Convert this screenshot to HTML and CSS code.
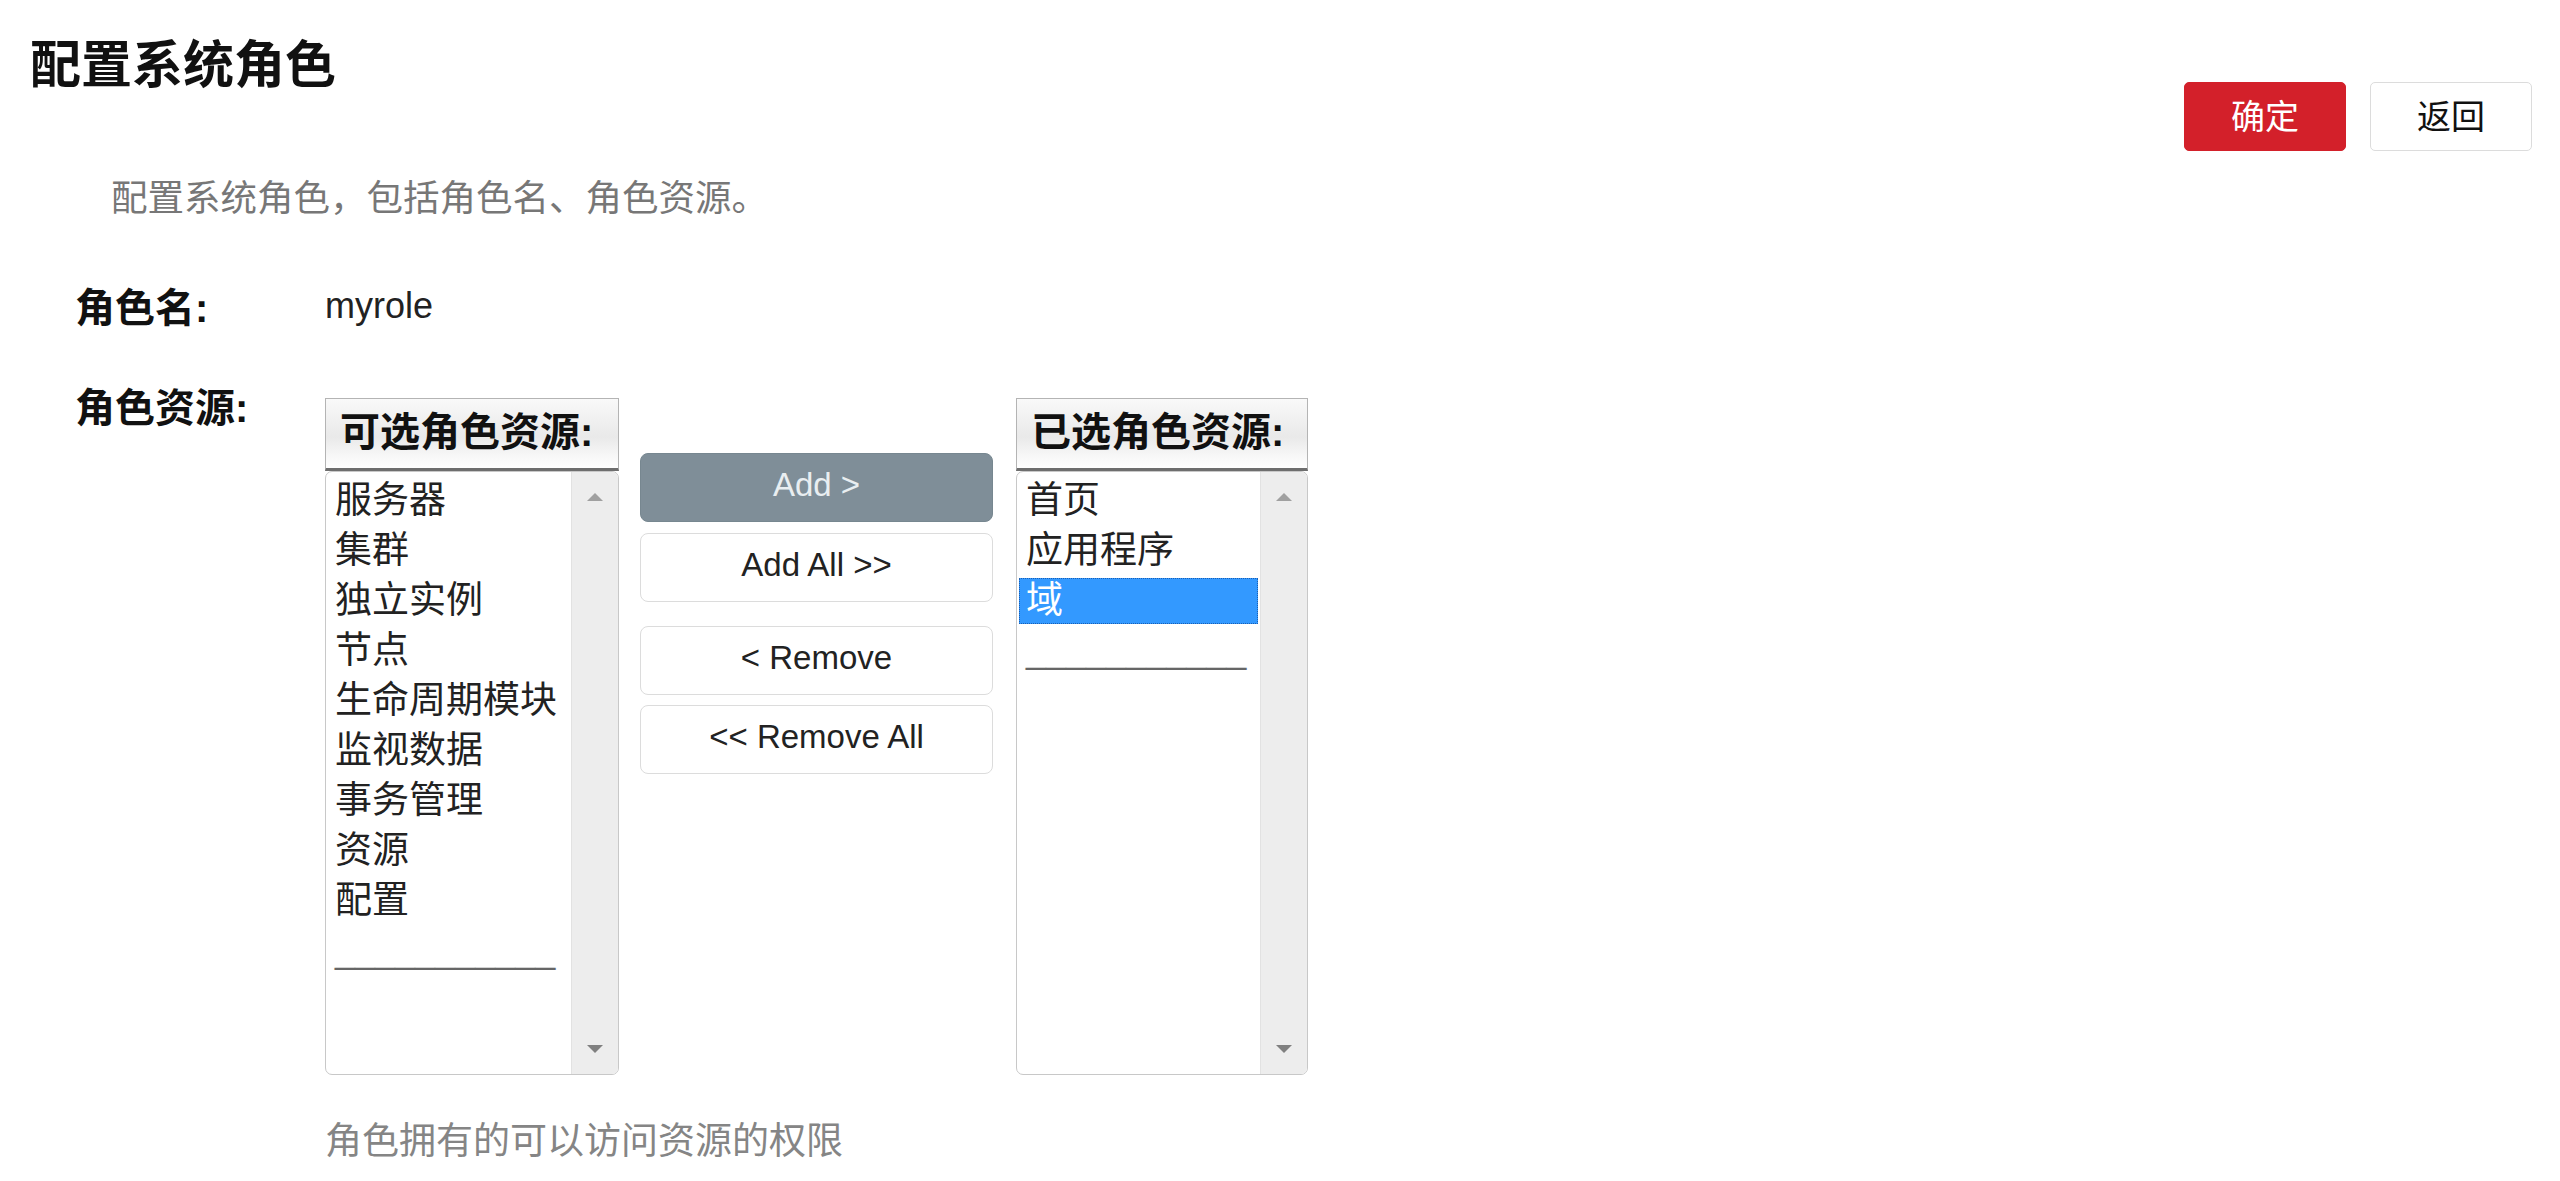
FILE: index.html
```html
<!DOCTYPE html>
<html lang="zh-CN">
<head>
<meta charset="utf-8">
<title>配置系统角色</title>
<link rel="stylesheet" href="styles.css">
</head>
<body>
<div class="page">
  <header class="topbar">
    <h1 class="title">配置系统角色</h1>
    <div class="actions">
      <button class="btn btn-primary" type="button">确定</button>
      <button class="btn" type="button">返回</button>
    </div>
  </header>
  <p class="desc">配置系统角色，包括角色名、角色资源。</p>

  <div class="form">
    <div class="row row-name">
      <div class="label">角色名:</div>
      <div class="value">myrole</div>
    </div>
    <div class="row row-res">
      <div class="label">角色资源:</div>
      <div class="field">
        <div class="picker">
          <div class="col">
            <div class="col-head">可选角色资源:</div>
            <div class="listbox">
              <ul class="options">
                <li>服务器</li>
                <li>集群</li>
                <li>独立实例</li>
                <li>节点</li>
                <li>生命周期模块</li>
                <li>监视数据</li>
                <li>事务管理</li>
                <li>资源</li>
                <li>配置</li>
                <li class="sep">___________</li>
              </ul>
              <div class="scroll"><span class="arr up"></span><span class="arr down"></span></div>
            </div>
          </div>
          <div class="moves">
            <button class="mv mv-add" type="button">Add &gt;</button>
            <button class="mv mv-addall" type="button">Add All &gt;&gt;</button>
            <button class="mv mv-remove" type="button">&lt; Remove</button>
            <button class="mv mv-removeall" type="button">&lt;&lt; Remove All</button>
          </div>
          <div class="col col-right">
            <div class="col-head">已选角色资源:</div>
            <div class="listbox">
              <ul class="options">
                <li>首页</li>
                <li>应用程序</li>
                <li class="selected">域</li>
                <li class="sep">___________</li>
              </ul>
              <div class="scroll"><span class="arr up"></span><span class="arr down"></span></div>
            </div>
          </div>
        </div>
        <p class="hint">角色拥有的可以访问资源的权限</p>
      </div>
    </div>
  </div>
</div>
</body>
</html>
```
FILE: styles.css
```css
* { box-sizing: border-box; }

html, body {
  margin: 0;
  padding: 0;
  background: #fff;
}

body {
  font-family: "Liberation Sans", "Noto Sans CJK SC", sans-serif;
  color: #222;
}

.page {
  padding: 35px 28px 0 30px;
}

.topbar {
  display: flex;
  justify-content: space-between;
  align-items: flex-start;
}

.title {
  margin: 0;
  font-size: 51px;
  line-height: 62px;
  font-weight: bold;
  color: #111;
}

.actions {
  display: flex;
  gap: 24px;
  margin-top: 47px;
}

.btn {
  width: 162px;
  height: 69px;
  padding: 0;
  border: 1px solid #dcdcdc;
  border-radius: 5px;
  background: #fff;
  color: #111;
  font-family: "Liberation Sans", "Noto Sans CJK SC", sans-serif;
  font-size: 34px;
  line-height: 1;
}

.btn-primary {
  background: #d3202a;
  border-color: #d3202a;
  color: #fff;
}

.desc {
  margin: 30px 0 0 81px;
  font-size: 36.5px;
  line-height: 36px;
  color: #777;
}

.row {
  display: flex;
  padding-left: 45px;
}

.row-name {
  margin-top: 71px;
}

.row-res {
  margin-top: 62px;
}

.label {
  width: 250px;
  flex: none;
  padding-top: 2px;
  font-size: 40px;
  line-height: 36px;
  font-weight: bold;
  color: #111;
}

.value {
  font-size: 36px;
  line-height: 36px;
  color: #222;
}

.field {
  margin-top: 10px;
}

.picker {
  display: flex;
  align-items: flex-start;
}

.col {
  width: 294px;
  flex: none;
}

.col-right {
  width: 292px;
}

.col-head {
  height: 73px;
  border: 1px solid #b4b4b4;
  border-bottom: 3px solid #6e6e6e;
  background: linear-gradient(#f9f9f9 0%, #e9e9e9 55%, #f6f6f6 80%, #ffffff 100%);
  padding-left: 14px;
  font-size: 40px;
  line-height: 66px;
  font-weight: bold;
  color: #111;
  white-space: nowrap;
}

.listbox {
  display: flex;
  height: 604px;
  border: 1px solid #c8c8c8;
  border-radius: 7px;
  background: #fff;
  overflow: hidden;
}

.options {
  flex: 1;
  list-style: none;
  margin: 0 2px;
  padding: 6px 0 0;
}

.options li {
  height: 46px;
  margin: 0 0 4px;
  padding-left: 7px;
  font-size: 37px;
  line-height: 46px;
  color: #222;
  white-space: nowrap;
}

.options li.selected {
  background: #3399ff;
  color: #fff;
  outline: 1px dotted #1a5fb4;
  outline-offset: -1px;
}

.options li.sep {
  font-family: "Liberation Sans", sans-serif;
  font-size: 36px;
  color: #666;
}

.scroll {
  width: 47px;
  flex: none;
  background: #ededed;
  border-left: 1px solid #e2e2e2;
  display: flex;
  flex-direction: column;
  justify-content: space-between;
  align-items: center;
  padding: 21px 0 21px;
}

.arr {
  width: 0;
  height: 0;
  border-left: 8px solid transparent;
  border-right: 8px solid transparent;
}

.arr.up {
  border-bottom: 8px solid #a0a0a0;
}

.arr.down {
  border-top: 8px solid #808080;
}

.moves {
  width: 353px;
  flex: none;
  margin: 55px 23px 0 21px;
  display: flex;
  flex-direction: column;
}

.mv {
  height: 69px;
  padding: 0 0 6px;
  border: 1px solid #dcdcdc;
  border-radius: 8px;
  background: #fff;
  color: #222;
  font-family: "Liberation Sans", sans-serif;
  font-size: 33px;
  line-height: 1;
}

.mv-add {
  background: #7f8e98;
  border-color: #778790;
  color: #e9eef1;
}

.mv-addall {
  margin-top: 11px;
}

.mv-remove {
  margin-top: 24px;
}

.mv-removeall {
  margin-top: 10px;
}

.hint {
  margin: 49px 0 0;
  font-size: 37px;
  line-height: 36px;
  color: #858585;
}
```
